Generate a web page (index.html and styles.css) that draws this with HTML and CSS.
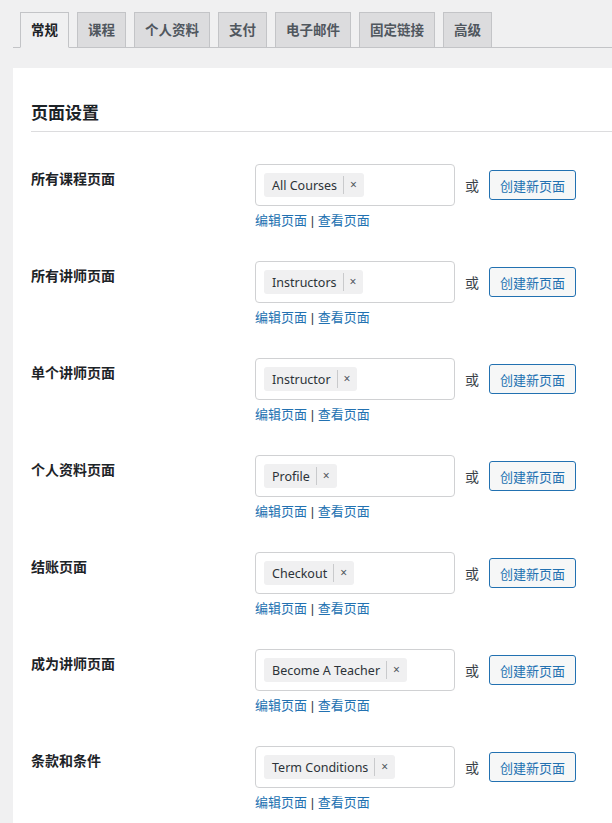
FILE: index.html
```html
<!DOCTYPE html>
<html lang="zh-CN">
<head>
  <meta charset="UTF-8">
  <meta name="viewport" content="width=device-width, initial-scale=1.0">
  <title>设置</title>
  <link rel="stylesheet" href="styles.css">
</head>
<body>
  <!-- Settings tabs -->
  <nav class="tab-bar">
    <a class="tab active" href="#">常规</a>
    <a class="tab" href="#">课程</a>
    <a class="tab" href="#">个人资料</a>
    <a class="tab" href="#">支付</a>
    <a class="tab" href="#">电子邮件</a>
    <a class="tab" href="#">固定链接</a>
    <a class="tab" href="#">高级</a>
  </nav>

  <div class="panel">
    <h2 class="panel-title">页面设置</h2>

    <div class="form-row">
      <div class="row-label">所有课程页面</div>
      <div class="row-field">
        <div class="field-line">
          <div class="page-select"><span class="chip">All Courses<span class="chip-x">×</span></span></div>
          <span class="or">或</span>
          <button class="create-btn">创建新页面</button>
        </div>
        <div class="page-links"><a href="#">编辑页面</a> | <a href="#">查看页面</a></div>
      </div>
    </div>

    <div class="form-row">
      <div class="row-label">所有讲师页面</div>
      <div class="row-field">
        <div class="field-line">
          <div class="page-select"><span class="chip">Instructors<span class="chip-x">×</span></span></div>
          <span class="or">或</span>
          <button class="create-btn">创建新页面</button>
        </div>
        <div class="page-links"><a href="#">编辑页面</a> | <a href="#">查看页面</a></div>
      </div>
    </div>

    <div class="form-row">
      <div class="row-label">单个讲师页面</div>
      <div class="row-field">
        <div class="field-line">
          <div class="page-select"><span class="chip">Instructor<span class="chip-x">×</span></span></div>
          <span class="or">或</span>
          <button class="create-btn">创建新页面</button>
        </div>
        <div class="page-links"><a href="#">编辑页面</a> | <a href="#">查看页面</a></div>
      </div>
    </div>

    <div class="form-row">
      <div class="row-label">个人资料页面</div>
      <div class="row-field">
        <div class="field-line">
          <div class="page-select"><span class="chip">Profile<span class="chip-x">×</span></span></div>
          <span class="or">或</span>
          <button class="create-btn">创建新页面</button>
        </div>
        <div class="page-links"><a href="#">编辑页面</a> | <a href="#">查看页面</a></div>
      </div>
    </div>

    <div class="form-row">
      <div class="row-label">结账页面</div>
      <div class="row-field">
        <div class="field-line">
          <div class="page-select"><span class="chip">Checkout<span class="chip-x">×</span></span></div>
          <span class="or">或</span>
          <button class="create-btn">创建新页面</button>
        </div>
        <div class="page-links"><a href="#">编辑页面</a> | <a href="#">查看页面</a></div>
      </div>
    </div>

    <div class="form-row">
      <div class="row-label">成为讲师页面</div>
      <div class="row-field">
        <div class="field-line">
          <div class="page-select"><span class="chip">Become A Teacher<span class="chip-x">×</span></span></div>
          <span class="or">或</span>
          <button class="create-btn">创建新页面</button>
        </div>
        <div class="page-links"><a href="#">编辑页面</a> | <a href="#">查看页面</a></div>
      </div>
    </div>

    <div class="form-row">
      <div class="row-label">条款和条件</div>
      <div class="row-field">
        <div class="field-line">
          <div class="page-select"><span class="chip">Term Conditions<span class="chip-x">×</span></span></div>
          <span class="or">或</span>
          <button class="create-btn">创建新页面</button>
        </div>
        <div class="page-links"><a href="#">编辑页面</a> | <a href="#">查看页面</a></div>
      </div>
    </div>
  </div>
</body>
</html>
```

FILE: styles.css
```css
/* Settings page */
body {
  margin: 0;
  padding: 12px 0 0 0;
  background-color: #f0f0f1;
  color: #1d2327;
  font-family: "Noto Sans", "Noto Sans CJK SC", sans-serif;
  font-size: 13px;
  overflow: hidden;
}

.tab-bar {
  display: flex;
  margin-left: 13px;
  padding-left: 7px;
  border-bottom: 1px solid #c3c4c7;
}

.tab {
  display: block;
  margin-right: 8px;
  margin-bottom: -1px;
  padding: 5px 10px;
  line-height: 24px;
  font-size: 13.5px;
  font-weight: 700;
  color: #50575e;
  text-decoration: none;
  background: #dcdcde;
  border: 1px solid #c3c4c7;
}

.tab.active {
  color: #1d2327;
  background: #f0f0f1;
  border-bottom-color: #f0f0f1;
}

.panel {
  margin: 20px 0 0 13px;
  padding: 33px 0 20px 18px;
  background: #ffffff;
}

.panel-title {
  margin: 0;
  padding-bottom: 6px;
  font-size: 17px;
  line-height: 24px;
  font-weight: 700;
  color: #1d2327;
  border-bottom: 1px solid #dcdcde;
}

.form-row {
  display: flex;
  margin-top: 32px;
}

.form-row + .form-row {
  margin-top: 31px;
}

.row-label {
  width: 224px;
  padding-top: 5px;
  font-size: 14px;
  line-height: 20px;
  font-weight: 700;
  color: #1d2327;
}

.field-line {
  display: flex;
  align-items: center;
}

.page-select {
  display: flex;
  align-items: center;
  box-sizing: border-box;
  width: 200px;
  height: 42px;
  padding: 0 8px;
  border: 1px solid #d0d1d3;
  border-radius: 4px;
}

.chip {
  display: flex;
  align-items: center;
  height: 24px;
  padding-left: 8px;
  background: #f0f0f1;
  border-radius: 3px;
  color: #2c3338;
  font-size: 12.5px;
}

.chip-x {
  margin-left: 6px;
  padding: 0 7px 0 6px;
  border-left: 1px solid #c9cacc;
  line-height: 18px;
  font-size: 12px;
  color: #50575e;
}

.or {
  margin-left: 10px;
  font-size: 14px;
  color: #3c434a;
}

.create-btn {
  margin-left: 10px;
  height: 30px;
  padding: 0 10px;
  font-family: inherit;
  font-size: 13px;
  color: #2271b1;
  background: #f6f7f7;
  border: 1px solid #2271b1;
  border-radius: 3px;
  cursor: pointer;
}

.page-links {
  margin-top: 6px;
  line-height: 18px;
  font-family: "Liberation Sans", "Noto Sans CJK SC", sans-serif;
  color: #3c434a;
}

.page-links a {
  color: #2271b1;
  text-decoration: none;
}
```
